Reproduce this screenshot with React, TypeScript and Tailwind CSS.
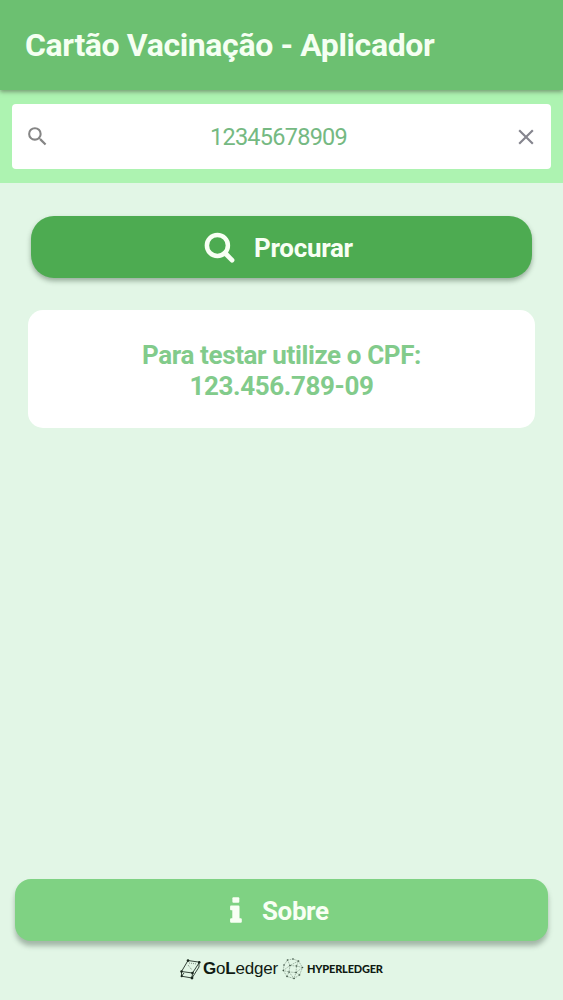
import React from "react";
import { MdClose, MdSearch } from "react-icons/md";

function MagnifierIcon() {
  return (
    <svg className="block h-[31px] w-[31px]" viewBox="0 0 31 31" fill="none" stroke="currentColor" aria-hidden="true">
      <circle cx="13.4" cy="13.4" r="10.5" strokeWidth="4.5" />
      <path d="M21 21L28 28.2" strokeWidth="4.8" strokeLinecap="round" />
    </svg>
  );
}

function InfoIcon() {
  return (
    <svg className="block h-[26px] w-[12px]" viewBox="0 0 12 26" fill="currentColor" aria-hidden="true">
      <rect x="2.4" y="0.2" width="6.9" height="5.6" rx="1" />
      <path d="M1 8.6H8.4Q9.5 8.6 9.5 9.7V21.2H10.7Q11.8 21.2 11.8 22.3V24.7Q11.8 25.8 10.7 25.8H1.2Q0.1 25.8 0.1 24.7V22.3Q0.1 21.2 1.2 21.2H2.3V13.2H1Q0.1 13.2 0.1 12.2V9.7Q0.1 8.6 1 8.6Z" />
    </svg>
  );
}

function LedgerMark() {
  return (
    <svg className="block h-[21px] w-[21px]" viewBox="0 0 21 21" fill="none" stroke="#17251b" aria-hidden="true">
      <path d="M8 1.5L19.5 3.2L12.5 14L1.5 12.5ZM1.5 12.5V17.2L12 19L19 8V3.2M12.5 14L12 19M1.5 17.2L4 14" strokeWidth="0.85" />
      <path d="M9 4L16.5 5M8 6L12 11" strokeWidth="0.5" strokeDasharray="1 1" />
      <g fill="#17251b" stroke="none">
        <circle cx="8" cy="1.6" r="1.3" />
        <circle cx="19.3" cy="3.2" r="1.2" />
        <circle cx="1.5" cy="12.5" r="1.2" />
        <circle cx="12.5" cy="14" r="1.3" />
        <circle cx="1.7" cy="17.2" r="1.1" />
        <circle cx="12" cy="19" r="1.4" />
      </g>
    </svg>
  );
}

const nodes = [
  [5.5, 2], [11, 1], [16.5, 3], [20.5, 9.5], [17.5, 17], [12, 20.5],
  [5, 18.5], [1.3, 12.5], [2, 7], [8, 7.5], [14.5, 8], [7, 14], [14, 14.5],
];

function NetworkMark() {
  return (
    <svg className="block h-[22px] w-[22px]" viewBox="0 0 22 22" fill="none" stroke="#647b69" aria-hidden="true">
      <path
        d="M5.5 2L11 1L16.5 3L20.5 9.5L17.5 17L12 20.5L5 18.5L1.3 12.5L2 7ZM5.5 2L8 7.5L16.5 3L14.5 8L20.5 9.5L14 14.5L12 20.5L7 14L1.3 12.5L8 7.5L14.5 8L14 14.5L7 14L8 7.5M5 18.5L7 14M14 14.5L17.5 17"
        strokeWidth="0.5"
        strokeDasharray="1.6 0.7"
      />
      <g fill="#3e5344" stroke="none">
        {nodes.map(([x, y]) => (
          <circle key={`${x}-${y}`} cx={x} cy={y} r="0.8" />
        ))}
      </g>
    </svg>
  );
}

export default function App() {
  return (
    <div className="flex h-[1000px] w-full flex-col overflow-hidden bg-[#e2f6e6] font-['Roboto',sans-serif]">
      <header className="z-10 flex h-[90px] shrink-0 items-center bg-[#6cc071] pl-[25px] shadow-[0_2px_4px_rgba(70,75,60,0.5)]">
        <h1 className="whitespace-nowrap text-[32px] leading-9 font-bold tracking-[-0.38px] text-[#f5fff2]">
          Cartão Vacinação - Aplicador
        </h1>
      </header>

      <div className="h-[93px] shrink-0 bg-[#adf3b1] px-[12px] pt-[14px]">
        <label className="flex h-[65px] w-[539px] items-center rounded-[4px] bg-white pr-[12px] pl-[13px]">
          <MdSearch className="h-[25px] w-[25px] shrink-0 text-[#858585]" />
          <input
            className="min-w-0 flex-1 bg-transparent pt-[3px] pr-[6px] text-center text-[23.5px] tracking-[-0.75px] text-[#75b982] outline-none"
            defaultValue="12345678909"
            aria-label="CPF"
          />
          <MdClose className="h-[26px] w-[26px] shrink-0 text-[#85858e]" />
        </label>
      </div>

      <main className="flex flex-1 flex-col pt-[33px]">
        <button className="ml-[31px] flex h-[62px] w-[501px] items-center rounded-[23px] bg-[#4dab51] pl-[173px] text-[#f8fff4] shadow-[0_3px_5px_rgba(40,65,45,0.4)]">
          <MagnifierIcon />
          <span className="ml-[19px] pt-[2px] text-[26px] leading-8 font-bold tracking-[-0.3px]">Procurar</span>
        </button>

        <section className="mt-[32px] ml-[28px] h-[118px] w-[507px] rounded-[15px] bg-white pt-[30px] text-center text-[26px] leading-[31px] font-bold tracking-[-0.38px] text-[#82cb8b]">
          <p>Para testar utilize o CPF:</p>
          <p>123.456.789-09</p>
        </section>
      </main>

      <footer className="flex h-[121px] shrink-0 flex-col">
        <button className="ml-[15px] flex h-[62px] w-[533px] shrink-0 items-center rounded-[16px] bg-[#7fd283] pl-[215px] text-[#f8fff4] shadow-[0_5px_5px_rgba(70,90,75,0.4)]">
          <InfoIcon />
          <span className="ml-[20px] pt-[2px] text-[26px] leading-8 font-bold tracking-[-0.4px]">Sobre</span>
        </button>
        <div className="mt-[17px] ml-[180px] flex h-[22px] items-center text-[#101b13]">
          <LedgerMark />
          <span className="ml-[2px] w-[79px] whitespace-nowrap font-['Liberation_Sans',sans-serif] text-[17px] leading-5 tracking-[-0.2px]">
            <b>G</b>o<b>L</b>edger
          </span>
          <NetworkMark />
          <span className="ml-[3px] whitespace-nowrap font-['Lato',sans-serif] text-[11px] leading-4 font-black tracking-[-0.2px]">
            HYPERLEDGER
          </span>
        </div>
      </footer>
    </div>
  );
}
